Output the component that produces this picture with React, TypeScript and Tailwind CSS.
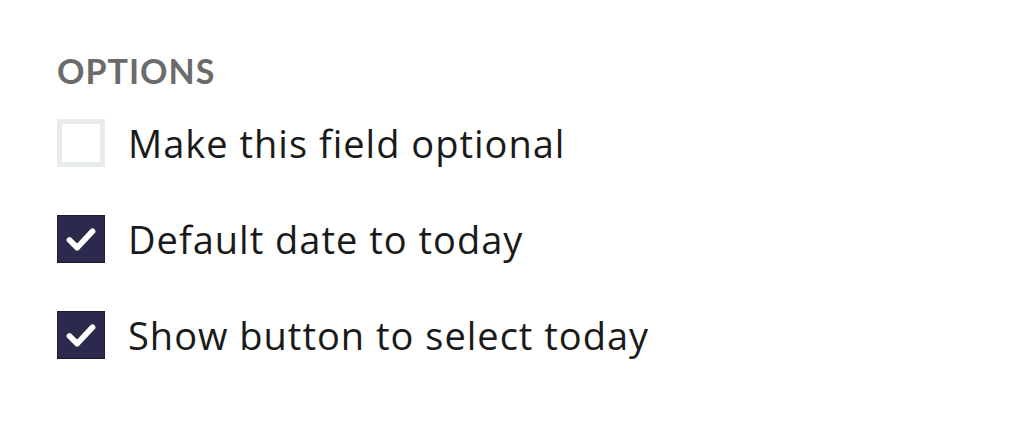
function Check() {
  return (
    <svg viewBox="0 0 48 48" className="h-full w-full">
      <path d="M12 25 L20 33 L36 16" fill="none" stroke="white" strokeWidth="6" strokeLinecap="round" strokeLinejoin="round" />
    </svg>
  )
}

const options = [
  { label: 'Make this field optional', checked: false },
  { label: 'Default date to today', checked: true },
  { label: 'Show button to select today', checked: true },
]

export default function App() {
  return (
    <div className="h-[424px] w-[1024px] bg-white pl-[57px] pt-[52px]" style={{ fontFamily: 'Lato, "Noto Sans", sans-serif' }}>
      <div className="text-[34px] font-bold leading-[38px] tracking-[1px] text-[#6b6b6b]">OPTIONS</div>
      <div className="mt-[29px] flex flex-col gap-[48px]">
        {options.map((o) => (
          <label key={o.label} className="flex items-center gap-[23px]">
            {o.checked ? (
              <span className="flex h-[48px] w-[48px] items-center justify-center border border-[#1c1b33] bg-[#2b2a4c]">
                <Check />
              </span>
            ) : (
              <span className="h-[48px] w-[48px] border-[5px] border-[#e8edec] bg-white" />
            )}
            <span className="font-['Open_Sans',sans-serif] text-[38px] leading-[48px] tracking-[1px] text-[#1a1a1a] [font-variant-ligatures:none]">{o.label}</span>
          </label>
        ))}
      </div>
    </div>
  )
}
